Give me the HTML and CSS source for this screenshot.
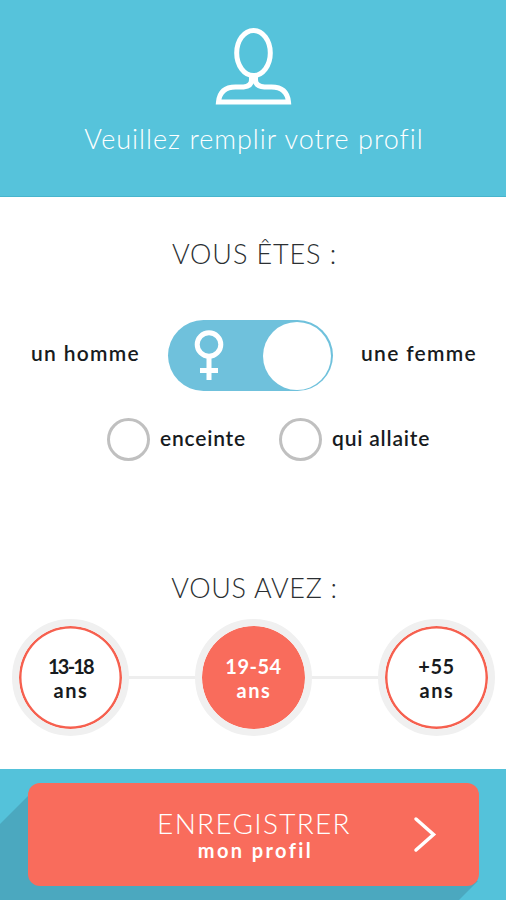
FILE: index.html
```html
<!DOCTYPE html>
<html lang="fr">
  <head>
    <meta charset="UTF-8" />
    <meta name="viewport" content="width=device-width, initial-scale=1.0" />
    <title>Profil</title>

    <link rel="stylesheet" href="styles.css">
  </head>

  <body>
    <header class="header">
      <svg class="avatar" width="78" height="78" viewBox="0 0 78 78">
        <ellipse cx="39.5" cy="25" rx="16.800" ry="22.5" />
        <path d="M37.500 48v4c0 4.500-3 6.500-8 7h-8C11.500 59 5.500 64 4.500 74h70C73.500 64 67.500 59 57.500 59h-7c-6-.5-9-2.500-9-7V48" />
      </svg>
      <h1 class="title">Veuillez remplir votre profil</h1>
    </header>

    <main class="content">
      <h2 class="question etes">VOUS ÊTES :</h2>

      <div class="gender">
        <span class="label homme">un homme</span>
        <div class="toggle">
          <svg class="venus" width="30" height="52" viewBox="0 0 30 52">
            <circle cx="15" cy="14.500" r="11.800" />
            <path d="M15 26v24M6 40.500h18" />
          </svg>
          <div class="knob"></div>
        </div>
        <span class="label femme">une femme</span>
      </div>

      <div class="options">
        <div class="option">
          <span class="radio"></span>
          <span class="label enceinte">enceinte</span>
        </div>
        <div class="option">
          <span class="radio"></span>
          <span class="label allaite">qui allaite</span>
        </div>
      </div>

      <h2 class="question avez">VOUS AVEZ :</h2>

      <div class="ages">
        <div class="age"><span class="teen">13-18</span><span class="ans">ans</span></div>
        <div class="line"></div>
        <div class="age active"><span>19-54</span><span class="ans">ans</span></div>
        <div class="line"></div>
        <div class="age"><span>+55</span><span class="ans">ans</span></div>
      </div>
    </main>

    <footer class="footer">
      <button class="save" type="button">
        <span class="save-text">
          <span class="save-top">ENREGISTRER</span>
          <span class="save-bottom">mon profil</span>
        </span>
        <svg class="chevron" width="24" height="38" viewBox="0 0 24 38">
          <path d="M3 3l17.500 15.500L3 34" />
        </svg>
      </button>
    </footer>
  </body>
</html>
```
FILE: styles.css
```css
* {
  margin: 0;
  padding: 0;
  box-sizing: border-box;
}

body {
  width: 506px;
  height: 900px;
  display: flex;
  flex-direction: column;
  overflow: hidden;
  font-family: Lato, "Liberation Sans", sans-serif;
  background-color: #ffffff;
  color: #171b1e;
  white-space: nowrap;
}

/* header */
.header {
  height: 197px;
  padding-top: 28px;
  display: flex;
  flex-direction: column;
  align-items: center;
  background-color: #56c3db;
  border-bottom: 1px solid #47b5cd;
}

.avatar {
  fill: none;
  stroke: #ffffff;
  stroke-width: 5;
}

.title {
  margin-top: 16px;
  padding-left: 2px;
  line-height: 34px;
  font-size: 27px;
  font-weight: 300;
  letter-spacing: 1px;
  color: #ffffff;
}

/* questions */
.content {
  height: 572px;
  display: flex;
  flex-direction: column;
}

.question {
  padding-left: 3px;
  font-size: 27px;
  font-weight: 300;
  line-height: 34px;
  letter-spacing: 0.9px;
  text-align: center;
  color: #2b2f32;
}

.etes {
  margin-top: 40px;
}

.label {
  font-size: 21px;
  font-weight: 600;
  line-height: 24px;
}

.gender {
  margin-top: 49px;
  padding-left: 31px;
  display: flex;
  align-items: center;
}

.gender .label {
  margin-top: -5px;
}

.homme {
  width: 137px;
  letter-spacing: 1.3px;
}

.femme {
  margin-left: 28px;
  letter-spacing: 1.3px;
}

.toggle {
  width: 165px;
  height: 71px;
  padding: 0 2px 0 26px;
  display: flex;
  align-items: center;
  justify-content: space-between;
  border-radius: 36px;
  background-color: #6fc1dc;
}

.venus {
  fill: none;
  stroke: #ffffff;
  stroke-width: 5;
}

.knob {
  width: 68px;
  height: 68px;
  border-radius: 50%;
  background-color: #ffffff;
}

.options {
  margin-top: 27px;
  padding-left: 107px;
  display: flex;
}

.option {
  width: 172px;
  display: flex;
  align-items: center;
  gap: 10px;
}

.option .label {
  margin-top: -4px;
  letter-spacing: 0.8px;
}

.radio {
  width: 43px;
  height: 43px;
  border: 3px solid #c0c0c0;
  border-radius: 50%;
}

.avez {
  margin-top: 110px;
  letter-spacing: 0.7px;
}

/* age steps */
.ages {
  margin-top: 14px;
  padding-left: 12px;
  display: flex;
  align-items: center;
}

.age {
  width: 117px;
  height: 117px;
  flex: none;
  display: flex;
  flex-direction: column;
  align-items: center;
  justify-content: center;
  border: 7px solid #f0f0f0;
  border-radius: 50%;
  box-shadow: inset 0 0 0 2.500px #f6604f;
  font-size: 20px;
  font-weight: 700;
  line-height: 24px;
  letter-spacing: 0.5px;
}

.teen {
  letter-spacing: -1.8px;
}

.ans {
  padding-left: 1px;
  letter-spacing: 1.6px;
}

.age.active {
  background-color: #f96c5c;
  background-clip: padding-box;
  box-shadow: none;
  color: #ffffff;
}

.line {
  width: 66px;
  height: 3px;
  background-color: #eeeeee;
}

/* footer */
.footer {
  position: relative;
  height: 131px;
  padding: 14px 27px 0 28px;
  background-color: #54c2da;
}

/* long shadow of the button */
.footer::before {
  content: "";
  position: absolute;
  inset: 0;
  background-color: #4ba8bf;
  clip-path: polygon(0 55px, 40px 15px, 478px 112px, 459px 131px, 0 131px);
}

.save {
  position: relative;
  width: 451px;
  height: 103px;
  padding: 0 42px 0 129px;
  display: flex;
  align-items: center;
  justify-content: space-between;
  border: none;
  border-radius: 12px;
  background-color: #f96c5c;
  color: #ffffff;
  font-family: inherit;
  cursor: pointer;
}

.save-text {
  width: 194px;
  display: flex;
  flex-direction: column;
  align-items: center;
}

.save-top {
  font-size: 28px;
  font-weight: 300;
  line-height: 30px;
  letter-spacing: 1.3px;
}

.save-bottom {
  font-size: 20px;
  font-weight: 700;
  line-height: 24px;
  letter-spacing: 2.400px;
  padding-left: 3px;
}

.chevron {
  fill: none;
  stroke: #ffffff;
  stroke-width: 3.500;
  stroke-linecap: round;
}
```
